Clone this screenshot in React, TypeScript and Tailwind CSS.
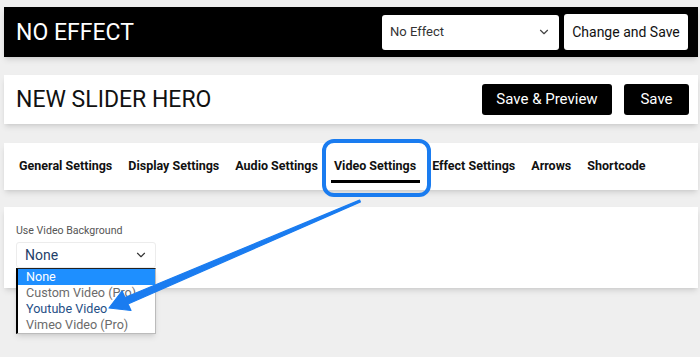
import { ChevronDown } from 'lucide-react'

const tabs = [
  'General Settings',
  'Display Settings',
  'Audio Settings',
  'Video Settings',
  'Effect Settings',
  'Arrows',
  'Shortcode',
]

const videoOptions = [
  { label: 'None', className: 'bg-[#1e8fff] text-white' },
  { label: 'Custom Video (Pro)', className: 'text-[#6b6b6b]' },
  { label: 'Youtube Video', className: 'text-[#1f4f86]' },
  { label: 'Vimeo Video (Pro)', className: 'text-[#6b6b6b]' },
]

export default function App() {
  return (
    <div className="relative h-[357px] w-[700px] overflow-hidden bg-[#efefef] pt-[7px] pl-[4px] pr-[2px] font-['Roboto',sans-serif]">
      {/* effect bar */}
      <div className="flex h-[50px] items-center justify-between bg-black pl-[12px] pr-[10px] shadow-md">
        <h1 className="text-[23px] leading-none text-white">NO EFFECT</h1>
        <div className="flex items-center gap-[5px]">
          <div className="flex h-[35px] w-[177px] items-center justify-between rounded-[3px] bg-white pl-[8px] pr-[8px] text-[13px] text-[#333]">
            <span>No Effect</span>
            <ChevronDown size={14} strokeWidth={2} className="text-[#444]" />
          </div>
          <button className="h-[36px] w-[124px] rounded-[3px] bg-white text-[14px] text-[#111]">
            Change and Save
          </button>
        </div>
      </div>

      {/* title bar */}
      <div className="mt-[18px] flex h-[49px] items-center justify-between bg-white pl-[12px] pr-[9px] shadow-md">
        <h2 className="text-[23px] leading-none text-[#111]">NEW SLIDER HERO</h2>
        <div className="flex items-center gap-[12px]">
          <button className="h-[31px] w-[130px] rounded-[3px] bg-black text-[15px] text-white">
            Save &amp; Preview
          </button>
          <button className="h-[31px] w-[65px] rounded-[3px] bg-black text-[15px] text-white">
            Save
          </button>
        </div>
      </div>

      {/* tabs */}
      <div className="relative mt-[19px] flex h-[47px] items-center gap-[16px] bg-white pl-[15px] shadow-md">
        {tabs.map((t) => (
          <div key={t} className="relative text-[12.5px] font-bold text-[#111]">
            {t}
            {t === 'Video Settings' && (
              <div className="absolute left-[-3px] right-[-4px] top-[23px] h-[3px] bg-black" />
            )}
          </div>
        ))}
      </div>

      {/* video settings */}
      <div className="relative mt-[17px] h-[81px] bg-white px-[12px] pt-[17px] shadow-md">
        <div className="text-[10.6px] leading-[13px] text-[#555]">Use Video Background</div>
        <div className="mt-[5px] flex h-[26px] w-[140px] items-center justify-between rounded-[3px] border border-[#ececec] pl-[8px] pr-[7px] text-[14px] text-[#1f3f6a]">
          <span>None</span>
          <ChevronDown size={14} strokeWidth={2} className="text-[#333]" />
        </div>
        <div className="absolute left-[12px] top-[61px] w-[140px] border border-[#bbb] border-l-2 border-l-black border-t-[#222] bg-white shadow-md">
          {videoOptions.map((o) => (
            <div key={o.label} className={`h-[16px] pl-[8px] text-[12.6px] leading-[16px] ${o.className}`}>
              {o.label}
            </div>
          ))}
        </div>
      </div>

      {/* annotation box */}
      <div className="absolute left-[322px] top-[139px] h-[58px] w-[109px] rounded-[12px] border-[4px] border-[#1a7cf0]" />

      {/* annotation arrow */}
      <svg className="absolute left-0 top-0" width="700" height="357" viewBox="0 0 700 357">
        <polygon
          points="360.4,201.9 128,304 131,310.5 109,308 122,291 125,297.5 359.6,200.1"
          fill="#1a7cf0"
          stroke="#1a7cf0"
          strokeWidth="1.2"
          strokeLinejoin="round"
        />
      </svg>
    </div>
  )
}
